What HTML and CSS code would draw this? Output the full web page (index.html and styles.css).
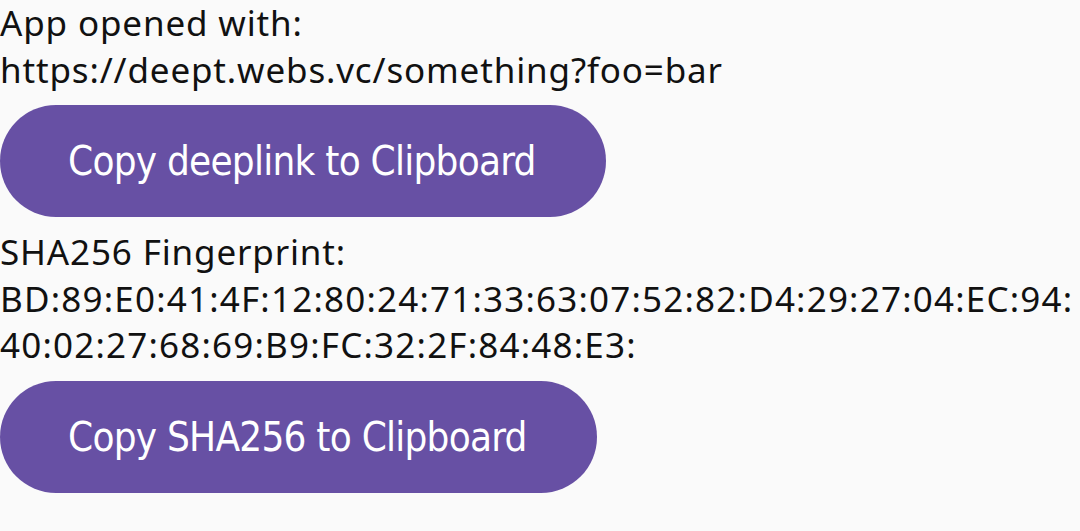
FILE: index.html
```html
<!DOCTYPE html>
<html lang="en">
<head>
<meta charset="utf-8">
<title>Deeplink</title>
<link rel="stylesheet" href="styles.css">
</head>
<body>
<main class="page">
  <p class="info">App opened with:<br>https://deept.webs.vc/something?foo=bar</p>
  <button class="pill">Copy deeplink to Clipboard</button>
  <p class="info">SHA256 Fingerprint:<br><span class="fp">BD:89:E0:41:4F:12:80:24:71:33:63:07:52:82:D4:29:27:04:EC:94:40:02:27:68:69:B9:FC:32:2F:84:48:E3:</span></p>
  <button class="pill">Copy SHA256 to Clipboard</button>
</main>
</body>
</html>
```
FILE: styles.css
```css
html, body {
  margin: 0;
  padding: 0;
  background: #fafafa;
}

.page {
  display: flex;
  flex-direction: column;
  align-items: flex-start;
  gap: 12px;
  width: 1080px;
}

.info {
  margin: 0;
  font-family: "Noto Sans", "Open Sans", sans-serif;
  font-size: 35px;
  line-height: 46.5px;
  letter-spacing: 0.85px;
  color: #111111;
}

.fp {
  word-break: break-all;
  letter-spacing: 1.2px;
}

.pill {
  display: inline-flex;
  align-items: center;
  height: 112px;
  padding: 0 70px 0 68px;
  border: none;
  border-radius: 56px;
  background: #6750a4;
  color: #ffffff;
  font-family: "DejaVu Sans Condensed", "DejaVu Sans", sans-serif;
  font-size: 40px;
  letter-spacing: -0.75px;
  white-space: nowrap;
}
```
